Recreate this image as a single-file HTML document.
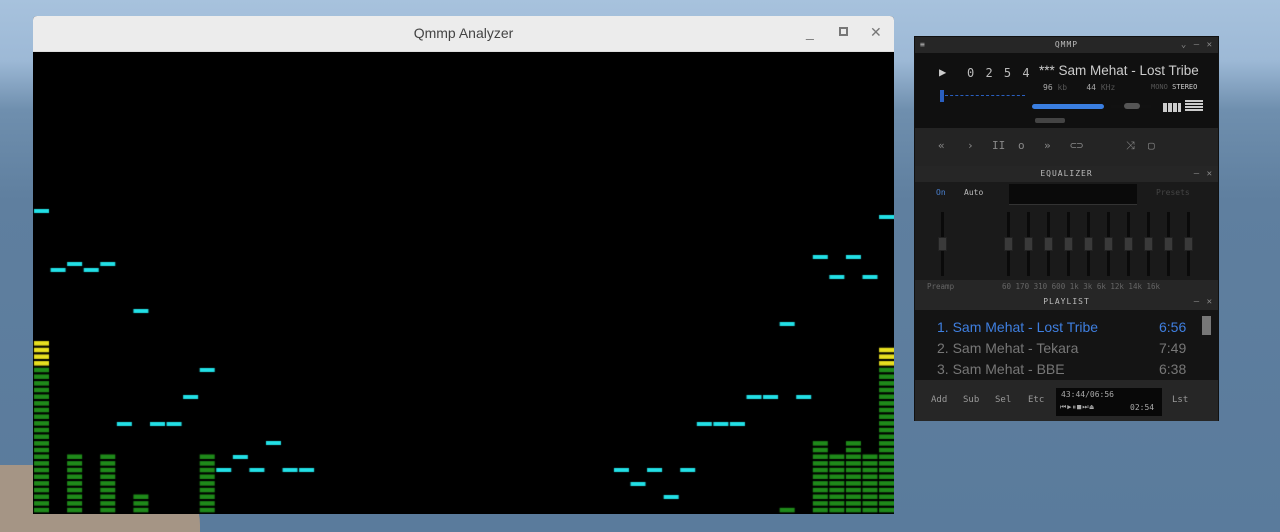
<!DOCTYPE html>
<html><head><meta charset="utf-8"><style>
*{margin:0;padding:0;box-sizing:border-box}
body{width:1280px;height:532px;overflow:hidden;position:relative;font-family:"Liberation Sans",sans-serif;
background:linear-gradient(#a7c2dd 0px,#9db9d6 60px,#6f8fae 110px,#5f7f9f 200px,#5a7b9c 532px)}
.rock{position:absolute;left:0;top:465px;width:200px;height:67px;background:#a59585;border-radius:0 60px 0 0}
.win{position:absolute;left:33px;top:16px;width:861px;height:498px;background:#000;border-radius:4px 4px 0 0;overflow:hidden}
.tb{height:36px;background:#ececec;position:relative;border-bottom:1px solid #ddd}
.tb .t{position:absolute;left:0;right:0;top:9px;text-align:center;font-size:14px;color:#444}
.tb .b{position:absolute;top:8px;font-size:14px;color:#777}
canvas{position:absolute;left:0;top:0}
.pl{position:absolute;left:914px;top:36px;width:305px;height:385px;background:#1e1e1e;border:1px solid #111;font-family:"DejaVu Sans Mono",monospace;color:#999}
.bar{position:absolute;left:0;width:303px;background:#262626;height:16px;font-size:8px;text-align:center;letter-spacing:1px;line-height:16px;color:#bbb}
.bar .x{position:absolute;right:5px;top:0;font-size:9px;color:#888}
.abs{position:absolute}
</style></head><body>
<div class="rock"></div>
<div class="win">
<div class="tb"><div class="t">Qmmp Analyzer</div>
<div class="b" style="left:773px">_</div><div class="b" style="left:806px;top:11px;width:9px;height:9px;border:2px solid #777"></div><div class="b" style="left:837px">✕</div></div>
<canvas id="c" width="861" height="498"></canvas>
</div>
<div class="pl">
<div class="bar" style="top:0">QMMP<span class="abs" style="left:5px;top:0">≡</span><span class="x">⌄ ‒ ✕</span></div>
<div class="abs" style="left:0;top:16px;width:303px;height:75px;background:#101010"></div>
<div class="abs" style="left:24px;top:28px;font-size:12px;color:#ccc">▶</div>
<div class="abs" style="left:52px;top:29px;font-size:12px;color:#bbb;letter-spacing:2px">0 2 5 4</div>
<div class="abs" style="left:124px;top:26px;font-family:'Liberation Sans',sans-serif;font-size:13.5px;color:#ccc;white-space:nowrap">*** Sam Mehat - Lost Tribe</div>
<div class="abs" style="left:128px;top:46px;font-size:8px;color:#aaa">96 <span style="color:#555">kb</span>&nbsp;&nbsp;&nbsp; 44 <span style="color:#555">KHz</span></div>
<div class="abs" style="left:236px;top:46px;font-size:7px;color:#555">MONO <span style="color:#ccc">STEREO</span></div>
<div class="abs" style="left:25px;top:53px;width:4px;height:12px;background:#2a5fc0"></div>
<div class="abs" style="left:30px;top:58px;width:80px;height:2px;border-top:1px dashed #2a5fc0"></div>
<div class="abs" style="left:117px;top:67px;width:72px;height:5px;background:#3a7ee0;border-radius:3px"></div>
<div class="abs" style="left:196px;top:68px;width:40px;height:3px;background:#111"></div>
<div class="abs" style="left:209px;top:66px;width:16px;height:6px;background:#555;border-radius:3px"></div>
<div class="abs" style="left:248px;top:66px;width:18px;height:9px;background:repeating-linear-gradient(90deg,#ccc 0 4px,#101010 4px 5px)"></div>
<div class="abs" style="left:270px;top:63px;width:18px;height:12px;background:repeating-linear-gradient(#ccc 0 2px,#101010 2px 3px)"></div>
<div class="abs" style="left:120px;top:81px;width:30px;height:5px;background:#444;border-radius:2px"></div>
<div class="abs" style="left:0;top:91px;width:303px;height:38px;background:#242424;font-size:11px;color:#888">
<span class="abs" style="left:23px;top:11px">«</span><span class="abs" style="left:52px;top:11px">›</span><span class="abs" style="left:77px;top:11px">II</span><span class="abs" style="left:103px;top:11px">o</span><span class="abs" style="left:129px;top:11px">»</span><span class="abs" style="left:155px;top:11px">⊂⊃</span><span class="abs" style="left:211px;top:11px">⤨</span><span class="abs" style="left:233px;top:11px">▢</span></div>
<div class="bar" style="top:129px">EQUALIZER<span class="x">‒ ✕</span></div>
<div class="abs" style="left:0;top:145px;width:303px;height:98px;background:#1a1a1a"></div>
<div class="abs" style="left:21px;top:151px;font-size:8px;color:#4a80d0">On</div>
<div class="abs" style="left:49px;top:151px;font-size:8px;color:#bbb">Auto</div>
<div class="abs" style="left:94px;top:147px;width:128px;height:21px;background:#0a0a0a;border-bottom:1px solid #333"></div>
<div class="abs" style="left:241px;top:151px;font-size:8px;color:#444">Presets</div>
<div id="eq"></div>
<div class="abs" style="left:0;top:243px;width:303px;height:14px;background:#262626;font-size:7.5px;color:#666;line-height:14px"><span class="abs" style="left:12px">Preamp</span><span class="abs" style="left:87px;white-space:nowrap">60 170 310 600 1k  3k  6k 12k 14k 16k</span></div>
<div class="bar" style="top:257px">PLAYLIST<span class="x">‒ ✕</span></div>
<div class="abs" style="left:0;top:273px;width:303px;height:70px;background:#141414;font-family:'Liberation Sans',sans-serif;font-size:14px">
<div class="abs" style="left:22px;top:9px;color:#3f7fe0">1. Sam Mehat - Lost Tribe</div><div class="abs" style="left:244px;top:9px;color:#3f7fe0">6:56</div>
<div class="abs" style="left:22px;top:30px;color:#777">2. Sam Mehat - Tekara</div><div class="abs" style="left:244px;top:30px;color:#777">7:49</div>
<div class="abs" style="left:22px;top:51px;color:#777">3. Sam Mehat - BBE</div><div class="abs" style="left:244px;top:51px;color:#777">6:38</div>
<div class="abs" style="left:287px;top:6px;width:9px;height:19px;background:#777"></div></div>
<div class="abs" style="left:0;top:343px;width:303px;height:41px;background:#262626;font-size:9px;color:#999">
<span class="abs" style="left:16px;top:15px">Add</span><span class="abs" style="left:48px;top:15px">Sub</span><span class="abs" style="left:80px;top:15px">Sel</span><span class="abs" style="left:113px;top:15px">Etc</span>
<div class="abs" style="left:141px;top:8px;width:106px;height:28px;background:#080808;font-size:8px;color:#aaa"><span class="abs" style="left:5px;top:2px">43:44/06:56</span><span class="abs" style="left:4px;top:15px;font-size:7px;letter-spacing:1px">⏮▶⏸■⏭⏏</span><span class="abs" style="left:74px;top:15px">02:54</span></div>
<span class="abs" style="left:257px;top:15px">Lst</span></div>
</div>
<script>
var c=document.getElementById('c').getContext('2d');
var oy=-16,ox=-33;
var P=16.57;
function cx(i){return 34+i*P+ox}
var peaks={0:211,1:270,2:264,3:270,4:264,5:424,6:311,7:424,8:424,9:397,10:370,11:470,12:457,13:470,14:443,15:470,16:470,35:470,36:484,37:470,38:497,39:470,40:424,41:424,42:424,43:397,44:397,45:324,46:397,47:257,48:277,49:257,50:277,51:217};
var bars={0:[337,4],2:[450,0],4:[450,0],6:[496,0],10:[450,0],45:[507,0],47:[442,0],48:[450,0],49:[442,0],50:[450,0],51:[343,3]};
var S=6.67;
for(var k in bars){var tp=bars[k][0];var segs=Math.max(1,Math.round((513-tp)/S));
 for(var j=0;j<segs;j++){var yy=513-(j+1)*S+1.5;c.fillStyle=(j>=segs-bars[k][1])?'#e8e020':'#1f8a1a';c.fillRect(cx(+k),yy+oy,15,4.5);}}
c.fillStyle='#22e0e6';
for(var k in peaks){c.fillRect(cx(+k),peaks[k]-2+oy,15,4);}
var eq=document.getElementById('eq'),h='';
var xs=[26,92,112,132,152,172,192,212,232,252,272];
xs.forEach(function(x,i){h+='<div class="abs" style="left:'+x+'px;top:175px;width:3px;height:64px;background:#0a0a0a"></div><div class="abs" style="left:'+(x-3)+'px;top:200px;width:9px;height:14px;background:#3a3a3a;border:1px solid #222"></div>';});
eq.innerHTML=h;
</script>
</body></html>
